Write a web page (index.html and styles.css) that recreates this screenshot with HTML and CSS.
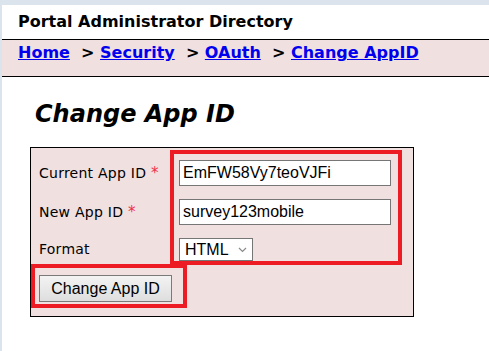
FILE: index.html
```html
<!DOCTYPE html>
<html lang="en">
<head>
    <meta charset="UTF-8">
    <title>Change App ID</title>
    <link rel="stylesheet" href="styles.css">
</head>
<body>
    <div class="page">
        <!-- Header Section -->
        <header class="site-title">Portal Administrator Directory</header>

        <nav class="crumbs">
            <a href="#">Home</a> &nbsp;&gt; <a href="#">Security</a> &nbsp;&gt; <a href="#">OAuth</a> &nbsp;&gt; <a href="#">Change AppID</a>
        </nav>

        <div class="main">
            <h1 class="page-title">Change App ID</h1>

            <form class="edit-box">
                <label for="current_id" class="field-label">Current App ID <span class="req">*</span></label>
                <input type="text" id="current_id" class="text-field" value="EmFW58Vy7teoVJFi">

                <label for="new_id" class="field-label">New App ID <span class="req">*</span></label>
                <input type="text" id="new_id" class="text-field" value="survey123mobile">

                <label for="format" class="field-label">Format</label>
                <div class="select-wrap">
                    <select id="format" class="select-field">
                        <option>HTML</option>
                        <option>JSON</option>
                    </select>
                    <svg class="chevron" width="9" height="6" viewBox="0 0 9 6"><path d="M1 1 L4.5 4.5 L8 1" fill="none" stroke="#8a8a8a" stroke-width="1.2"/></svg>
                </div>

                <div class="actions">
                    <button type="submit" class="submit-btn">Change App ID</button>
                </div>

                <!-- annotation marks -->
                <div class="mark mark-fields"></div>
                <div class="mark mark-button"></div>
            </form>
        </div>
    </div>
</body>
</html>
```

FILE: styles.css
```css
/* General Styles */
body {
    margin: 0;
    padding: 5px 0 0 2px;
    background-color: #dbe4ec;
    font-family: 'DejaVu Sans', Verdana, sans-serif;
    color: #000;
}

.page {
    background-color: #fff;
    min-height: 346px;
}

.site-title {
    font-size: 16px;
    font-weight: bold;
    line-height: 19px;
    padding: 7px 16px 8px;
}

.crumbs {
    background-color: #f0e0e0;
    border-top: 1px solid #000;
    border-bottom: 1px solid #000;
    font-size: 16px;
    font-weight: bold;
    line-height: 19px;
    padding: 3px 16px 14px;
}

.crumbs a {
    color: #0000ee;
}

.main {
    padding: 23px 0 0 28px;
}

.page-title {
    margin: 0 0 19px 5px;
    font-size: 24px;
    font-style: italic;
    font-weight: bold;
    line-height: 28px;
}

/* Form box */
.edit-box {
    position: relative;
    display: grid;
    grid-template-columns: 140px 212px;
    row-gap: 13px;
    align-items: center;
    width: 374px;
    padding: 12px 0 14px 8px;
    background-color: #f0e0e0;
    border: 1px solid #000;
}

.field-label {
    font-size: 14px;
    letter-spacing: 0.25px;
    line-height: 17px;
}

.req {
    color: #f0304a;
    font-size: 15px;
}

.text-field {
    width: 212px;
    height: 26px;
    box-sizing: border-box;
    margin: 0;
    padding: 0 3px;
    border: 1px solid #767676;
    background: #fff;
    font-family: 'Liberation Sans', Arial, sans-serif;
    font-size: 16px;
    color: #000;
}

.select-wrap {
    position: relative;
    width: 74px;
    height: 23px;
}

.select-field {
    appearance: none;
    -webkit-appearance: none;
    width: 74px;
    height: 23px;
    box-sizing: border-box;
    margin: 0;
    padding: 0 0 0 5px;
    border: 1px solid #767676;
    border-radius: 0;
    background: #fff;
    font-family: 'Liberation Sans', Arial, sans-serif;
    font-size: 16px;
    color: #000;
}

.chevron {
    position: absolute;
    right: 6px;
    top: 9px;
    pointer-events: none;
}

.actions {
    grid-column: 1 / 3;
    padding-top: 1px;
}

.submit-btn {
    width: 133px;
    height: 27px;
    margin: 0;
    padding: 0;
    border: 1px solid #7a7a7a;
    background: linear-gradient(#f3f3f3, #dedede);
    font-family: 'Liberation Sans', Arial, sans-serif;
    font-size: 16px;
    color: #000;
}

/* Red annotation rectangles */
.mark {
    position: absolute;
    border: 4px solid #ed1c24;
    box-sizing: border-box;
}

.mark-fields {
    left: 139px;
    top: 2px;
    width: 232px;
    height: 115px;
}

.mark-button {
    left: 0;
    top: 116px;
    width: 156px;
    height: 44px;
}
```
